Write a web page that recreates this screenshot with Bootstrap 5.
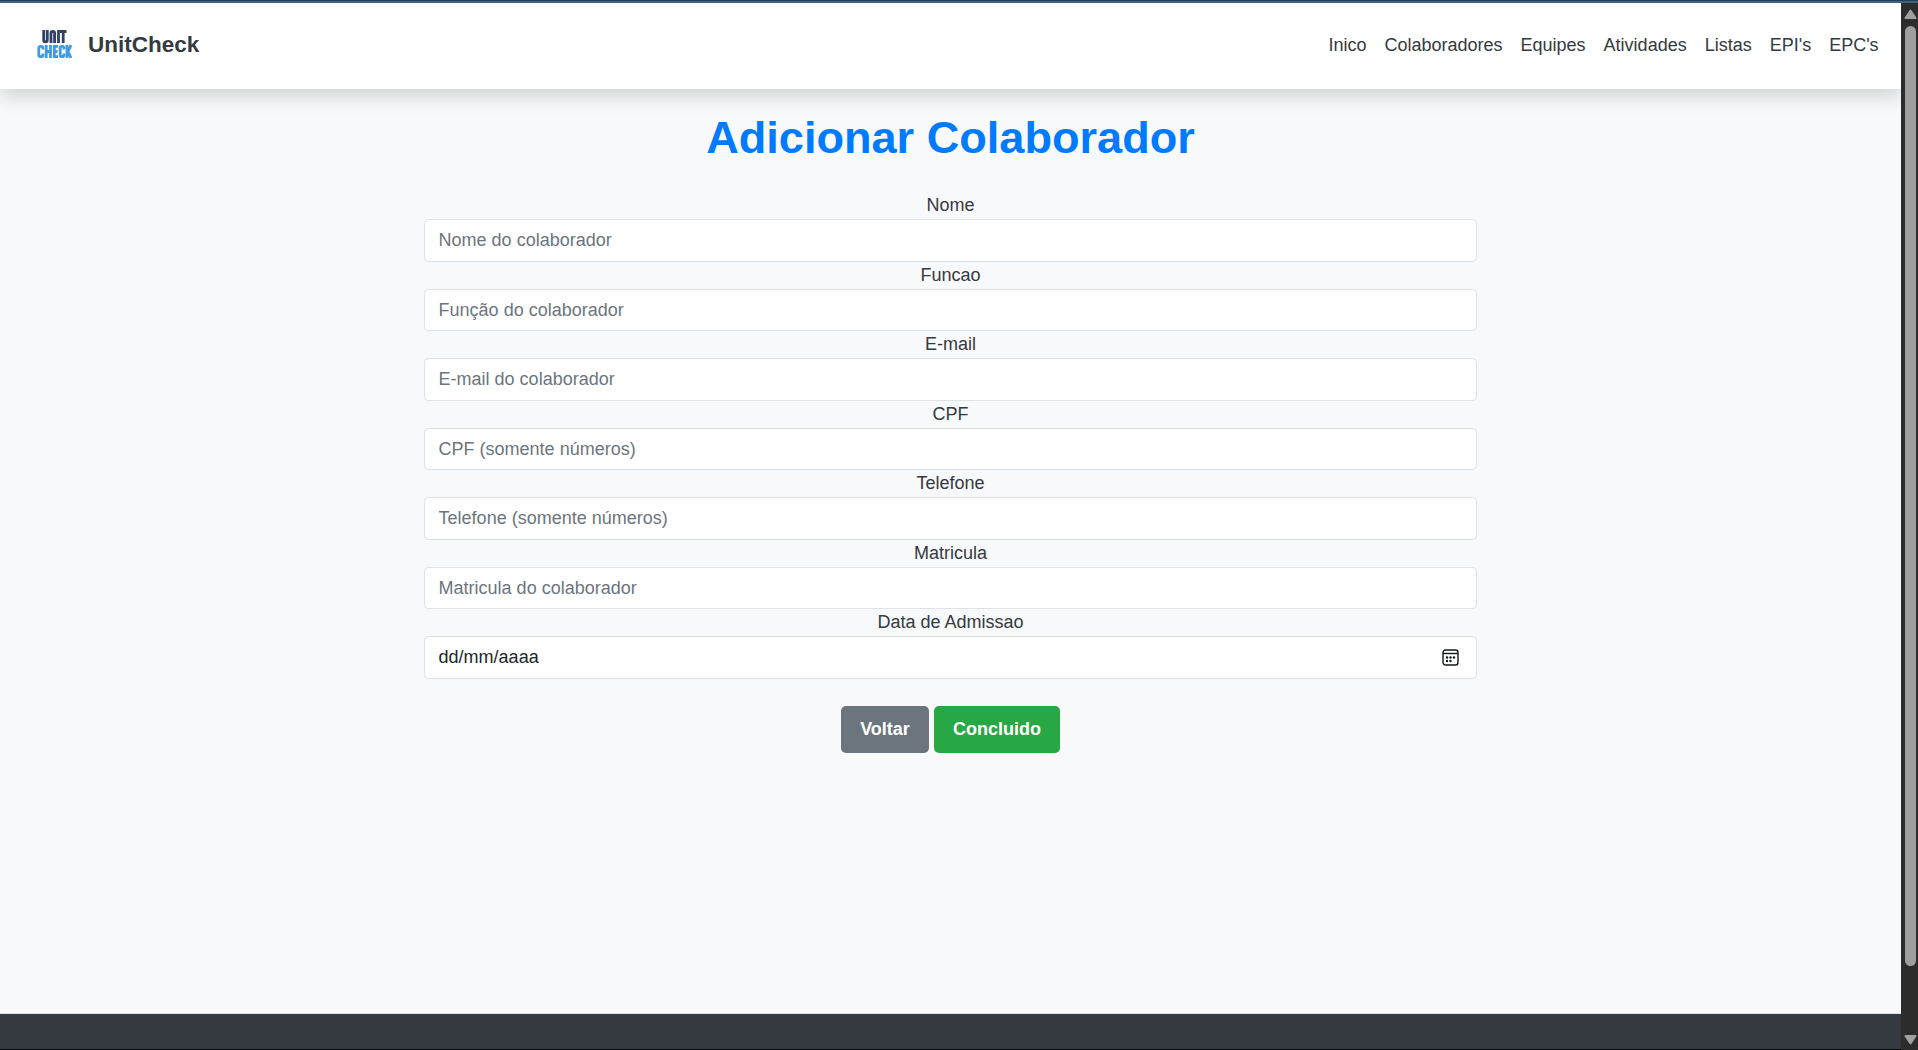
<!DOCTYPE html>
<html lang="pt-br">
<head>
<meta charset="utf-8">
<title>UnitCheck</title>
<link href="https://cdn.jsdelivr.net/npm/bootstrap@5.3.0/dist/css/bootstrap.min.css" rel="stylesheet">
<style>
html{font-size:18px}
body{font-family:"Liberation Sans",Arial,sans-serif;height:1050px;overflow:hidden;color:#343a40;background:#f8f9fa}
.top-edge{height:3px;background:#1d425c;border-bottom:2px solid #43637c}
.page-area{height:1047px}
.site-nav{height:86px;padding:7px 13.4px 9px 37px;box-shadow:0 8.8px 17.6px rgba(0,0,0,.15);z-index:1}
.site-nav .nav-link{color:#343a40;line-height:26px}
.site-nav .navbar-brand{font-size:22.5px;color:#343a40;padding:0;margin:0;gap:16px}
.site-nav .navbar-brand svg{margin-bottom:2px}
.view{min-width:0;overflow:hidden;background:#f8f9fa}
.page-title{font-size:45.1px;line-height:56px;color:#007bff;margin:21px 0 26.3px}
.form-box{width:1053px}
.field-label{line-height:27.1px;height:27.1px;display:block}
.form-box .form-control{height:42.4px;border-color:#dee2e6;border-radius:4.4px;padding:6.6px 13.6px;line-height:26px;color:#212529}
.form-box .form-control::placeholder{color:#6c757d}
.cal-icon{margin-right:3.2px}
.act-row{gap:5px;margin-top:27px}
.act{height:47px;font-size:18px;border-radius:5px;border:0;color:#fff}
.act-back{background:#6c757d;width:88px}
.act-done{background:#28a745;width:126px}
.foot{height:36px;background:#343a40;border-top:1px solid #dfe3e6}
.base-edge{height:1px;background:#050a0e}
.scroll-rail{width:17px;background:#2c2c2c;padding:6px 0 1px 1px}
.thumb{width:11px;height:940px;border-radius:6px;background:#9f9f9f;margin-top:7px}
</style>
<script src="https://cdn.jsdelivr.net/npm/bootstrap@5.3.0/dist/js/bootstrap.bundle.min.js"></script>
</head>
<body>
<div class="top-edge"></div>
<div class="page-area d-flex">
<div class="view flex-grow-1 d-flex flex-column">
<nav class="site-nav navbar navbar-expand bg-white flex-shrink-0">
<a class="navbar-brand fw-bold d-flex align-items-center" href="#">
<svg width="35" height="30" viewBox="0 0 35 30" fill="none" stroke-width="2.8">
<g stroke="#2f4268"><path d="M6.700 1V11Q6.700 12.800 8.500 12.800T10.300 11V1"/><path d="M14 14V4Q14 2.300 15.800 2.300T17.600 4V14"/><path d="M21.500 1V14M23 2.500H29.500M26.200 2V14"/></g>
<g stroke="#3f9be8"><path d="M6 20.500V19Q6 17.300 3.800 17.300T1.800 19V26Q1.800 27.700 3.800 27.700T6 26V24.500"/><path d="M9.200 16V29M13.500 16V29M9 22.500H13M21 17.400H17.300V27.600H21M17 22.500H20.500"/><path d="M27 20.500V19Q27 17.300 25 17.300T23.200 19V26Q23.200 27.700 25 27.700T27 26V24.500"/><path d="M30 16V29M34 16L31 22.500L34 29"/></g>
</svg>
<span>UnitCheck</span></a>
<div class="navbar-nav ms-auto">
<a class="nav-link" href="#">Inico</a><a class="nav-link" href="#">Colaboradores</a><a class="nav-link" href="#">Equipes</a><a class="nav-link" href="#">Atividades</a><a class="nav-link" href="#">Listas</a><a class="nav-link" href="#">EPI's</a><a class="nav-link" href="#">EPC's</a>
</div>
</nav>
<main class="flex-grow-1 text-center">
<h1 class="page-title fw-bold">Adicionar Colaborador</h1>
<form class="form-box mx-auto">
<label class="field-label" for="f1">Nome</label><input id="f1" class="form-control" placeholder="Nome do colaborador">
<label class="field-label" for="f2">Funcao</label><input id="f2" class="form-control" placeholder="Função do colaborador">
<label class="field-label" for="f3">E-mail</label><input id="f3" class="form-control" placeholder="E-mail do colaborador">
<label class="field-label" for="f4">CPF</label><input id="f4" class="form-control" placeholder="CPF (somente números)">
<label class="field-label" for="f5">Telefone</label><input id="f5" class="form-control" placeholder="Telefone (somente números)">
<label class="field-label" for="f6">Matricula</label><input id="f6" class="form-control" placeholder="Matricula do colaborador">
<label class="field-label">Data de Admissao</label>
<div class="form-control d-flex align-items-center justify-content-between bg-white"><span>dd/mm/aaaa</span>
<svg class="cal-icon" width="17" height="17" viewBox="0 0 17 17"><rect x="1" y="1" width="15" height="15" rx="2.500" fill="none" stroke="#15181b" stroke-width="1.400"/><path d="M1 4.500H16" stroke="#15181b" stroke-width="1.400"/><g fill="#15181b"><circle cx="5" cy="8.500" r="1.200"/><circle cx="8.500" cy="8.500" r="1.200"/><circle cx="12" cy="8.500" r="1.200"/><circle cx="5" cy="12" r="1.200"/><circle cx="8.500" cy="12" r="1.200"/></g></svg></div>
<div class="act-row d-flex justify-content-center">
<button type="button" class="btn act act-back fw-bold p-0">Voltar</button><button type="button" class="btn act act-done fw-bold p-0">Concluido</button>
</div>
</form>
</main>
<footer class="foot flex-shrink-0"></footer>
<div class="base-edge flex-shrink-0"></div>
</div>
<div class="scroll-rail d-flex flex-column align-items-center flex-shrink-0">
<svg class="flex-shrink-0" width="13" height="10" viewBox="0 0 13 10"><path d="M6.500 1.500L11.500 9H1.500Z" fill="#9f9f9f" stroke="#9f9f9f" stroke-width="2" stroke-linejoin="round"/></svg>
<div class="thumb flex-shrink-0"></div>
<svg class="mt-auto mb-1" width="13" height="10" viewBox="0 0 13 10"><path d="M6.500 8.500L11.500 1H1.500Z" fill="#9f9f9f" stroke="#9f9f9f" stroke-width="2" stroke-linejoin="round"/></svg>
</div>
</div>
</body>
</html>
